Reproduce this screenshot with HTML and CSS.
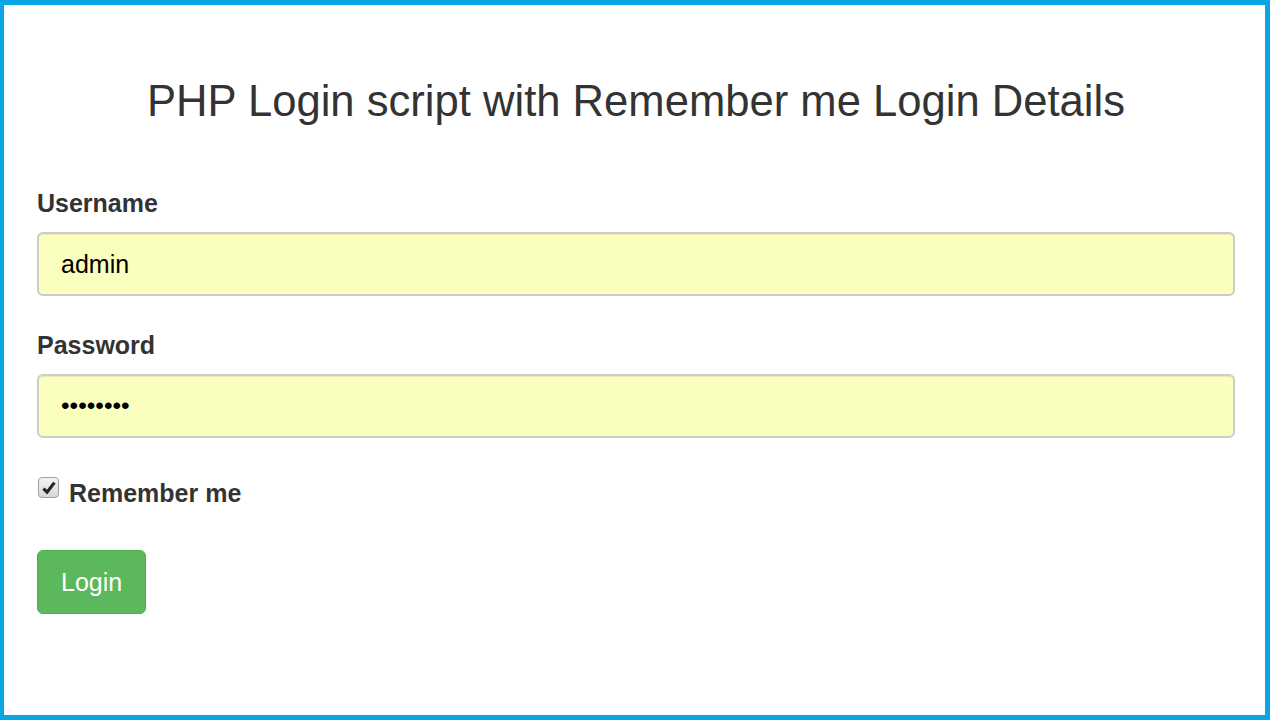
FILE: index.html
```html
<!DOCTYPE html>
<html>
<head>
<meta charset="utf-8">
<link rel="stylesheet" href="styles.css">
</head>
<body>
<div class="frame">
  <h1 class="title">PHP Login script with Remember me Login Details</h1>
  <form class="login">
    <div class="field">
      <label class="label">Username</label>
      <div class="input">admin</div>
    </div>
    <div class="field">
      <label class="label">Password</label>
      <div class="input pwd">&bull;&bull;&bull;&bull;&bull;&bull;&bull;&bull;</div>
    </div>
    <div class="remember">
      <span class="check"><svg width="16" height="16" viewBox="0 0 16 16"><path d="M2.4 8.6 L6.1 12.2 L13.4 2.6" fill="none" stroke="#262626" stroke-width="3.2" stroke-linejoin="miter" stroke-linecap="butt"/></svg></span>
      <span class="remember-text">Remember me</span>
    </div>
    <div class="actions"><span class="btn">Login</span></div>
  </form>
</div>
</body>
</html>
```
FILE: styles.css
```css
html, body { margin: 0; padding: 0; }
body { font-family: "Liberation Sans", Arial, sans-serif; color: #333; background: #fff; }
.frame {
  width: 1270px; height: 720px; box-sizing: border-box;
  border: 5px solid #0aa5e5; border-left-width: 4px;
  padding: 0 30px 0 33px;
}
.title {
  margin: 68px 0 0; text-align: center; font-weight: 400;
  font-size: 43.6px; line-height: 56px; color: #333;
}
.login { margin-top: 59px; display: flex; flex-direction: column; }
.field { display: flex; flex-direction: column; margin-bottom: 34px; }
.label { font-weight: 700; font-size: 25px; line-height: 30px; margin-bottom: 14px; }
.input {
  height: 64px; box-sizing: border-box; border: 2px solid #ccc; border-radius: 6px;
  background: #faffbd; padding: 0 22px; font-size: 25px; line-height: 60px; color: #000;
  box-shadow: inset 0 1px 1px rgba(0,0,0,.075);
}
.pwd { font-size: 24.5px; }
.remember { display: flex; align-items: flex-start; gap: 10px; margin-top: 5px; height: 32px; }
.check {
  width: 21px; height: 21px; box-sizing: border-box; border: 1px solid #a0a0a0; border-radius: 4px;
  background: linear-gradient(#f4f4f4, #d8d8d8); display: flex; align-items: center; justify-content: center;
  margin-left: 1px;
}
.remember-text { font-weight: 700; font-size: 25px; line-height: 30px; color: #333; margin-top: 1px; }
.actions { margin-top: 41px; display: flex; }
.btn {
  display: inline-block; background: #5cb85c; border: 1px solid #4cae4c; border-radius: 6px;
  color: #fff; font-size: 25px; line-height: 62px; padding: 0 23px; height: 64px; box-sizing: border-box;
}
```
